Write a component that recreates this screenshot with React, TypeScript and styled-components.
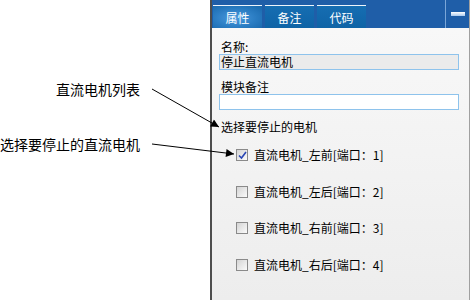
import React from 'react'
import styled, { createGlobalStyle } from 'styled-components'

const GlobalStyle = createGlobalStyle`
    html, body {
        margin: 0;
        padding: 0;
        background: #ffffff;
    }
    body {
        font-family: "Noto Sans CJK SC", "Noto Sans", sans-serif;
        color: #000;
    }
`

const Page = styled.div`
    position: relative;
    display: flex;
    width: 470px;
    height: 300px;
    overflow: hidden;
    background: #fff;
`

const Notes = styled.div`
    position: relative;
    width: 210px;
    flex-shrink: 0;
`

const NoteLabel = styled.div<{ $top: number; $right?: number; $left?: number }>`
    position: absolute;
    top: ${(p) => p.$top}px;
    ${(p) => (p.$right !== undefined ? `right: ${p.$right}px;` : '')}
    ${(p) => (p.$left !== undefined ? `left: ${p.$left}px;` : '')}
    font-size: 14px;
    line-height: 16px;
    white-space: nowrap;
`

const Arrows = styled.svg`
    position: absolute;
    left: 0;
    top: 0;
    width: 470px;
    height: 300px;
    pointer-events: none;
    z-index: 2;
`

const Panel = styled.div`
    flex: 1;
    display: flex;
    flex-direction: column;
    border-left: 2px solid #4e4e4e;
    border-right: 1px solid #a0a0a0;
`

const Header = styled.div`
    height: 28px;
    display: flex;
    align-items: flex-end;
    padding-left: 1px;
    background: #1f5ea8;
`

const Tab = styled.div<{ $active?: boolean }>`
    width: 49px;
    height: 22px;
    margin-right: 3px;
    border-top: 1px solid #eef4fb;
    display: flex;
    align-items: center;
    justify-content: center;
    font-size: 12px;
    color: #ffffff;
    background: ${(p) =>
        p.$active
            ? 'radial-gradient(ellipse at 45% 55%, #4a9ade 0%, #2a7cc2 55%, #1766aa 100%)'
            : 'linear-gradient(#166db2, #0f64a6)'};
`

const Spacer = styled.div`
    flex: 1;
`

const Divider = styled.div`
    align-self: stretch;
    width: 1px;
    background: #7aa6d8;
`

const MinButton = styled.div`
    align-self: stretch;
    width: 23px;
    display: flex;
    align-items: center;
    justify-content: center;
`

const MinBar = styled.div`
    width: 14px;
    height: 4px;
    margin-top: -1px;
    background: linear-gradient(#ffffff, #a9c9ee);
`

const Body = styled.div`
    flex: 1;
    display: flex;
    flex-direction: column;
    padding: 12px 10px 0 7px;
    background: linear-gradient(#f8f8f8, #ededed);
`

const FieldLabel = styled.div<{ $gap?: number }>`
    margin-top: ${(p) => p.$gap ?? 0}px;
    font-size: 12px;
    line-height: 14px;
    padding-left: 2px;
`

const TextBox = styled.div<{ $readonly?: boolean }>`
    height: 14px;
    border: 1px solid #8ec3ec;
    padding-left: 1px;
    font-size: 12px;
    line-height: 14px;
    background: ${(p) => (p.$readonly ? '#ebebeb' : '#ffffff')};
`

const List = styled.div`
    display: flex;
    flex-direction: column;
    gap: 16.5px;
    margin-top: 11px;
    padding-left: 17px;
`

const Row = styled.div`
    height: 20px;
    display: flex;
    align-items: center;
`

const Box = styled.div`
    width: 10px;
    height: 10px;
    border: 1px solid #8a8a8a;
    background: linear-gradient(135deg, #d4d4d4, #fbfbfb);
    display: flex;
    align-items: center;
    justify-content: center;
`

const RowText = styled.span`
    margin-left: 6px;
    font-size: 12px;
    line-height: 14px;
    white-space: nowrap;
`

const motors = [
    { name: '直流电机_左前', port: 1, checked: true },
    { name: '直流电机_左后', port: 2, checked: false },
    { name: '直流电机_右前', port: 3, checked: false },
    { name: '直流电机_右后', port: 4, checked: false },
]

const App: React.FC = () => {
    return (
        <Page>
            <GlobalStyle />
            <Notes>
                <NoteLabel $top={81} $right={70}>
                    直流电机列表
                </NoteLabel>
                <NoteLabel $top={136} $left={0}>
                    选择要停止的直流电机
                </NoteLabel>
            </Notes>
            <Arrows viewBox="0 0 470 300">
                <defs>
                    <marker
                        id="head"
                        viewBox="0 0 10 10"
                        refX="10"
                        refY="5"
                        markerWidth="9"
                        markerHeight="8"
                        markerUnits="userSpaceOnUse"
                        orient="auto"
                    >
                        <path d="M0 0 L10 5 L0 10 Z" fill="#000" />
                    </marker>
                </defs>
                <line x1="152" y1="89" x2="219" y2="127" stroke="#000" strokeWidth="1" markerEnd="url(#head)" />
                <line x1="152" y1="144" x2="234" y2="154" stroke="#000" strokeWidth="1" markerEnd="url(#head)" />
            </Arrows>
            <Panel>
                <Header>
                    <Tab $active>属性</Tab>
                    <Tab>备注</Tab>
                    <Tab>代码</Tab>
                    <Spacer />
                    <Divider />
                    <MinButton>
                        <MinBar />
                    </MinButton>
                </Header>
                <Body>
                    <FieldLabel>名称:</FieldLabel>
                    <TextBox $readonly>停止直流电机</TextBox>
                    <FieldLabel $gap={10}>模块备注</FieldLabel>
                    <TextBox />
                    <FieldLabel $gap={10}>选择要停止的电机</FieldLabel>
                    <List>
                        {motors.map((m) => (
                            <Row key={m.port}>
                                <Box>
                                    {m.checked && (
                                        <svg width="9" height="9" viewBox="0 0 9 9">
                                            <path d="M1 4.5 L3.5 7 L8 1" fill="none" stroke="#2a46b4" strokeWidth="1.6" />
                                        </svg>
                                    )}
                                </Box>
                                <RowText>
                                    {m.name}[端口：{m.port}]
                                </RowText>
                            </Row>
                        ))}
                    </List>
                </Body>
            </Panel>
        </Page>
    )
}

export default App
